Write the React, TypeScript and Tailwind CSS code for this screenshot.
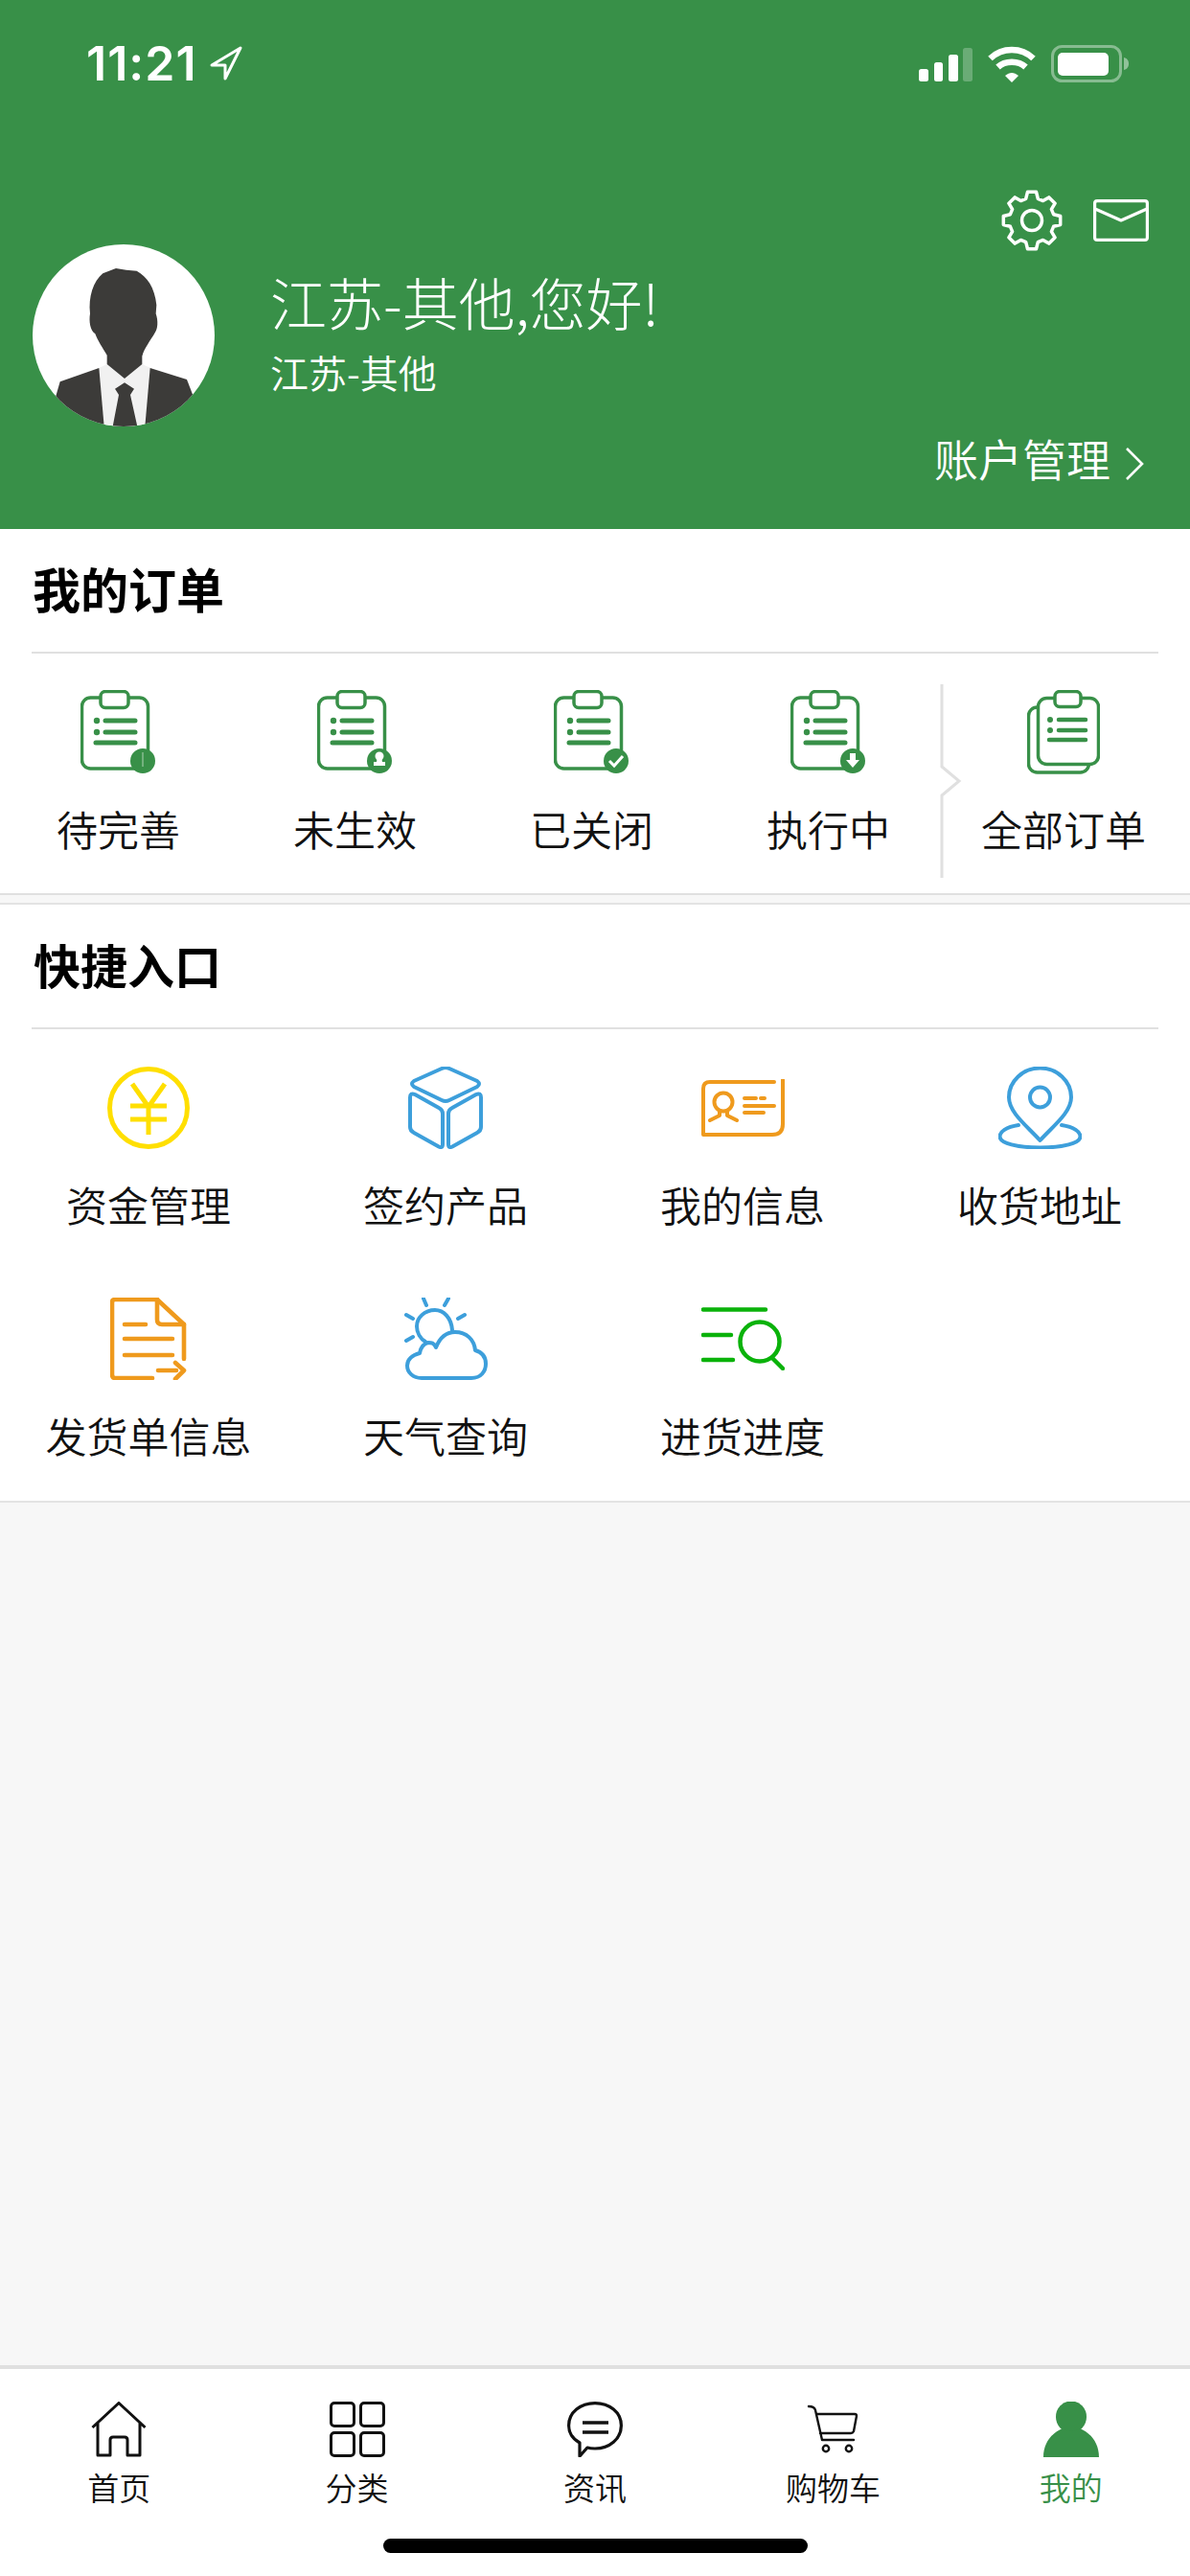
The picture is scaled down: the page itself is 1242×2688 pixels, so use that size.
import type { ReactNode } from 'react';

const GREEN = '#389048';

function gearPath() {
  const points: string[] = [];
  for (let i = 0; i < 8; i++) {
    const a = (i * Math.PI) / 4 - Math.PI / 2;
    const offsets: [number, number][] = [
      [-0.27, 23.5],
      [-0.15, 30],
      [0.15, 30],
      [0.27, 23.5],
    ];
    offsets.forEach(([da, r]) => {
      const x = 32 + r * Math.cos(a + da);
      const y = 32 + r * Math.sin(a + da);
      points.push(`${x.toFixed(1)} ${y.toFixed(1)}`);
    });
  }
  return 'M' + points.join(' L') + ' Z';
}

function StatusBar() {
  return (
    <div className="flex h-[132px] items-start justify-between pl-[90px] pr-[63px] pt-[47px]">
      <div className="flex items-center gap-[12px]">
        <span className="font-['Inter',sans-serif] text-[50px] leading-[38px] font-semibold tracking-[1px] text-white">
          11:21
        </span>
        <svg width="36" height="38" viewBox="0 0 36 38" fill="none" stroke="#fff" strokeWidth="3" strokeLinejoin="round">
          <path d="M33 3 L3 21 H17 V35 Z" />
        </svg>
      </div>
      <div className="flex items-center">
        <svg width="58" height="38" viewBox="0 0 58 38" fill="#fff">
          <rect x="2" y="24" width="10" height="13" rx="2.5" />
          <rect x="18" y="17" width="9" height="20" rx="2.5" />
          <rect x="33" y="9" width="10" height="28" rx="2.5" />
          <rect x="48" y="2" width="10" height="35" rx="2.5" opacity="0.25" />
        </svg>
        <svg className="ml-[16px]" width="50" height="38" viewBox="0 0 50 38" fill="none" stroke="#fff" strokeWidth="6.5">
          <path d="M2.5 13 C15 1, 35 1, 47.5 13" />
          <path d="M10.5 22 C18 15, 32 15, 39.5 22" />
          <path d="M18 31 L25 38 L32 31 C27 27, 23 27, 18 31 Z" fill="#fff" stroke="none" />
        </svg>
        <svg className="ml-[16px]" width="82" height="40" viewBox="0 0 82 40" fill="none">
          <rect x="1.5" y="1.5" width="71" height="36" rx="10" stroke="#fff" strokeOpacity="0.4" strokeWidth="3" />
          <rect x="7" y="8" width="53" height="24" rx="5" fill="#fff" />
          <path d="M76 13 C80 14, 81 17, 81 19.5 C81 22, 80 25, 76 26 Z" fill="#fff" fillOpacity="0.45" />
        </svg>
      </div>
    </div>
  );
}

function Avatar() {
  return (
    <div className="h-[190px] w-[190px] shrink-0 overflow-hidden rounded-full bg-white">
      <svg width="190" height="190" viewBox="42 45 570 570">
        <path d="M250 432 L275 420 H385 L412 432 L395 615 H265 Z" fill="#f1f1f1" />
        <path
          d="M262 136 L303 120 L335 125 L368 128 C400 145, 425 180, 430 235 L428 262 C436 285, 434 310, 425 322 C412 345, 392 370, 385 395 L385 420 L330 465 L275 420 L275 392 C262 370, 245 345, 238 325 C222 315, 218 285, 222 262 C216 210, 232 160, 262 136 Z"
          fill="#3c3b39"
        />
        <path d="M330 478 L360 497 L348 516 L370 615 H293 L312 516 L300 497 Z" fill="#3c3b39" />
        <path d="M115 520 L128 475 L250 432 L266 615 H100 Z" fill="#3c3b39" />
        <path d="M545 520 L525 468 L410 432 L394 615 H560 Z" fill="#3c3b39" />
      </svg>
    </div>
  );
}

function Header() {
  return (
    <header className="h-[552px] shrink-0 bg-[#389048] text-white">
      <StatusBar />
      <div className="flex h-[123px] items-start justify-end gap-[32px] pr-[43px] pt-[66px]">
        <svg width="64" height="64" viewBox="0 0 64 64" fill="none" stroke="#fff" strokeWidth="3.5" strokeLinejoin="round">
          <path d={gearPath()} />
          <circle cx="32" cy="32" r="10.5" />
        </svg>
        <svg className="mt-[10px]" width="58" height="44" viewBox="0 0 58 44" fill="none" stroke="#fff" strokeWidth="3.2" strokeLinejoin="round">
          <rect x="1.6" y="1.6" width="54.8" height="40.8" rx="2.5" />
          <path d="M2 10 L29 22 L56 10" />
        </svg>
      </div>
      <div className="flex items-start pl-[34px]">
        <Avatar />
        <div className="ml-[58px] pt-[24px]">
          <p className="text-[59px] leading-[72px] font-light">江苏-其他,您好!</p>
          <p className="mt-[12px] text-[40px] leading-[50px] font-[350]">江苏-其他</p>
        </div>
      </div>
      <div className="mt-[3px] flex items-center justify-end pr-[48px]">
        <span className="text-[46px] leading-[58px] font-[350]">账户管理</span>
        <svg className="ml-[15px] mt-[14px]" width="20" height="34" viewBox="0 0 20 34" fill="none" stroke="#fff" strokeWidth="2.6">
          <path d="M2 1 L18 17 L2 33" />
        </svg>
      </div>
    </header>
  );
}

function Clipboard({ badge }: { badge: ReactNode }) {
  return (
    <svg width="80" height="88" viewBox="0 0 80 88" fill="none">
      <rect x="1.5" y="8" width="69" height="74" rx="9" stroke={GREEN} strokeWidth="3.5" fill="#fff" />
      <rect x="21" y="1.5" width="29" height="17" rx="5" stroke={GREEN} strokeWidth="3.5" fill="#fff" />
      <circle cx="17" cy="32" r="3.2" fill={GREEN} />
      <circle cx="17" cy="44" r="3.2" fill={GREEN} />
      <path d="M26 32 H57 M26 44 H57 M16 55 H57" stroke={GREEN} strokeWidth="5" strokeLinecap="round" />
      <circle cx="65" cy="74" r="13" fill={GREEN} />
      {badge}
    </svg>
  );
}

function AllOrdersIcon() {
  return (
    <svg width="76" height="88" viewBox="0 0 76 88" fill="none">
      <rect x="1.5" y="18" width="63" height="68" rx="9" stroke={GREEN} strokeWidth="3.5" fill="#fff" />
      <rect x="11.5" y="8.5" width="63" height="69" rx="9" stroke={GREEN} strokeWidth="3.5" fill="#fff" />
      <rect x="29" y="1.5" width="27" height="16" rx="5" stroke={GREEN} strokeWidth="3.5" fill="#fff" />
      <circle cx="24" cy="31" r="3" fill={GREEN} />
      <circle cx="24" cy="42" r="3" fill={GREEN} />
      <path d="M33 31 H61 M33 42 H61 M23 52 H61" stroke={GREEN} strokeWidth="4.5" strokeLinecap="round" />
    </svg>
  );
}

const orders: { label: string; badge: ReactNode }[] = [
  { label: '待完善', badge: <path d="M65 65 V80" stroke="#fff" strokeOpacity="0.6" strokeWidth="1" /> },
  {
    label: '未生效',
    badge: (
      <g fill="#fff">
        <circle cx="65" cy="69" r="4.5" />
        <path d="M62.5 72 H67.5 L68 75 H71 V79 H59 V75 H62 Z" />
      </g>
    ),
  },
  {
    label: '已关闭',
    badge: <path d="M58 74 L63 79 L72 69" stroke="#fff" strokeWidth="3" />,
  },
  {
    label: '执行中',
    badge: <path d="M62 66 H68 V73 H72 L65 81 L58 73 H62 Z" fill="#fff" />,
  },
];

function OrderItem({ icon, label }: { icon: ReactNode; label: string }) {
  return (
    <div className="flex flex-col items-center">
      {icon}
      <span className="mt-[35px] text-[43px] leading-[42px] font-[350] whitespace-nowrap text-[#111]">{label}</span>
    </div>
  );
}

function OrdersSection() {
  return (
    <section className="h-[380px] shrink-0 bg-white">
      <h2 className="flex h-[128px] items-center pb-[6px] pl-[34px] text-[50px] font-semibold text-black">我的订单</h2>
      <div className="mx-[33px] h-[2px] bg-[#e0e0e0]" />
      <div className="flex pt-[32px]">
        <div className="flex pt-[6px]">
          {orders.map((o) => (
            <div key={o.label} className="w-[247px]">
              <OrderItem label={o.label} icon={<Clipboard badge={o.badge} />} />
            </div>
          ))}
        </div>
        <svg className="-ml-[7px] shrink-0" width="24" height="202" viewBox="0 0 24 202" fill="none" stroke="#e0e0e0" strokeWidth="3">
          <path d="M2 0 V86 L20 101 L2 116 V202" />
        </svg>
        <div className="w-[210px] pt-[6px]">
          <OrderItem label="全部订单" icon={<AllOrdersIcon />} />
        </div>
      </div>
    </section>
  );
}

const BLUE = '#3d9fdb';
const ORANGE = '#ef9a1d';

const quickLinks: { label: string; icon: ReactNode }[] = [
  {
    label: '资金管理',
    icon: (
      <svg width="86" height="86" viewBox="0 0 86 86" fill="none" stroke="#ffdf00" strokeWidth="5">
        <circle cx="43" cy="43" r="40.5" />
        <path d="M26 18 L43 42 L60 18 M24 41 H62 M24 55 H62 M43 42 V71" />
      </svg>
    ),
  },
  {
    label: '签约产品',
    icon: (
      <svg width="78" height="86" viewBox="0 0 78 86" fill="none" stroke={BLUE} strokeWidth="4" strokeLinejoin="round">
        <path d="M35 2 Q39 0 43 2 L72 15 Q76 18 72 21 L43 35 Q39 37 35 35 L6 21 Q2 18 6 15 Z" />
        <path d="M2 32 Q2 27 7 29 L32 43 Q36 45 36 49 V81 Q36 86 31 83 L6 69 Q2 67 2 63 Z" />
        <path d="M76 32 Q76 27 71 29 L46 43 Q42 45 42 49 V81 Q42 86 47 83 L72 69 Q76 67 76 63 Z" />
      </svg>
    ),
  },
  {
    label: '我的信息',
    icon: (
      <svg width="87" height="60" viewBox="0 0 87 60" fill="none" stroke={ORANGE} strokeWidth="4" strokeLinecap="round" strokeLinejoin="round">
        <path d="M76 3 H9 Q2 3 2 10 V58 H74 Q85 58 85 47 V1" />
        <circle cx="23" cy="24" r="9.5" />
        <path d="M19 33 V38 L9 43 M27 33 V38 L37 43" />
        <path d="M45 20 H57 M62 20 H66 M45 28 H76 M45 35 H65" />
      </svg>
    ),
  },
  {
    label: '收货地址',
    icon: (
      <svg width="87" height="86" viewBox="0 0 87 86" fill="none" stroke={BLUE} strokeWidth="4" strokeLinejoin="round" strokeLinecap="round">
        <path d="M43.5 77 C30 62, 11 48, 11 32 A32.5 30.5 0 1 1 76 32 C76 48, 57 62, 43.5 77 Z" />
        <circle cx="43.5" cy="32" r="10.5" />
        <path d="M21 61 C8 63, 1.5 68, 1.5 73 C1.5 80, 20 84.5, 43.5 84.5 C67 84.5, 85.5 80, 85.5 73 C85.5 68, 79 63, 66 61" />
      </svg>
    ),
  },
  {
    label: '发货单信息',
    icon: (
      <svg width="80" height="86" viewBox="0 0 80 86" fill="none" stroke={ORANGE} strokeWidth="4.6" strokeLinecap="round" strokeLinejoin="round">
        <path d="M44 84 H5 Q2 84 2 80 V5 Q2 2 5 2 H49 L77 28 V64" />
        <path d="M49 2 V23 Q49 28 54 28 H77" />
        <path d="M15 28 H37 M15 43 H65 M15 60 H65 M50 76 H69 M68 68 L77 76 L68 85" />
      </svg>
    ),
  },
  {
    label: '天气查询',
    icon: (
      <svg width="87" height="86" viewBox="0 0 87 86" fill="none" stroke={BLUE} strokeWidth="4" strokeLinecap="round" strokeLinejoin="round">
        <path d="M20 1 L23 8 M46 1 L42 8 M2 18 L9 22 M63 18 L56 22 M2 45 L9 41" />
        <path d="M50 34 C49 21, 41 13, 32 13 C21 13, 13 21, 13 30 C13 37, 17 43, 22 46" />
        <path d="M18 84 H70 C80 84 85 77 85 69 C85 62 81 57 74 55 C73 44 65 36 53 36 C44 36 37 42 33 52 C31 47 28 47 25 47 C20 48 17 53 16 58 C8 60 3 65 3 71 C3 78 9 84 18 84 Z" />
      </svg>
    ),
  },
  {
    label: '进货进度',
    icon: (
      <svg width="87" height="66" viewBox="0 0 87 66" fill="none" stroke="#0ab20a" strokeWidth="4.5" strokeLinecap="round">
        <path d="M2 2.5 H67 M2 29 H31 M2 55 H33" />
        <circle cx="61" cy="36" r="20.5" />
        <path d="M74 53 L85 64" />
      </svg>
    ),
  },
];

function QuickSection() {
  return (
    <section className="h-[626px] shrink-0 border-y-2 border-[#e3e3e3] bg-white">
      <h2 className="flex h-[128px] items-center pb-[5px] pl-[35px] text-[49px] font-semibold text-black">快捷入口</h2>
      <div className="mx-[33px] h-[2px] bg-[#e0e0e0]" />
      <div className="grid grid-cols-[repeat(4,310px)] gap-y-[77px] pt-[39px]">
        {quickLinks.map((q) => (
          <div key={q.label} className="flex flex-col items-center">
            <div className="flex h-[86px] items-center">{q.icon}</div>
            <span className="mt-[36px] text-[43px] leading-[42px] font-[350] whitespace-nowrap text-[#111]">{q.label}</span>
          </div>
        ))}
      </div>
    </section>
  );
}

const tabs: { label: string; active?: boolean; icon: ReactNode }[] = [
  {
    label: '首页',
    icon: (
      <svg width="58" height="58" viewBox="0 0 58 58" fill="none" stroke="#111" strokeWidth="3" strokeLinejoin="round">
        <path d="M1.5 27 L29 1.5 L56.5 27 M7 22 V56 H20 V40 Q20 37 23 37 H35 Q38 37 38 40 V56 H51 V22" />
      </svg>
    ),
  },
  {
    label: '分类',
    icon: (
      <svg width="58" height="58" viewBox="0 0 58 58" fill="none" stroke="#111" strokeWidth="3">
        <rect x="1.5" y="1.5" width="24" height="24" rx="3.5" />
        <rect x="32.5" y="1.5" width="24" height="24" rx="3.5" />
        <rect x="1.5" y="32.5" width="24" height="24" rx="3.5" />
        <rect x="32.5" y="32.5" width="24" height="24" rx="3.5" />
      </svg>
    ),
  },
  {
    label: '资讯',
    icon: (
      <svg width="58" height="58" viewBox="0 0 58 58" fill="none" stroke="#111" strokeWidth="3.2" strokeLinejoin="round">
        <path d="M29 1.6 C44 1.6, 56.4 11, 56.4 25 C56.4 39, 44 49, 29 49 C26 49, 24 49, 21 48 L13 57 L13 43 C6 39, 1.6 33, 1.6 25 C1.6 11, 14 1.6, 29 1.6 Z" />
        <path d="M16 22 H43 M16 32 H43" strokeWidth="3.6" />
      </svg>
    ),
  },
  {
    label: '购物车',
    icon: (
      <svg width="58" height="58" viewBox="0 0 58 58" fill="none" stroke="#111" strokeWidth="2.4" strokeLinecap="round" strokeLinejoin="round">
        <path d="M4 5 Q10 5 11 9 L18 40 H51 M12 13 H52 Q54 13 54 15 L51 31 Q50 33 48 33 H16" />
        <circle cx="22" cy="49" r="3.2" />
        <circle cx="46" cy="49" r="3.2" />
      </svg>
    ),
  },
  {
    label: '我的',
    active: true,
    icon: (
      <svg width="58" height="58" viewBox="0 0 58 58" fill={GREEN}>
        <ellipse cx="29" cy="16" rx="16" ry="16.5" />
        <path d="M0 58 C0 42, 10 32, 20 28 C26 32, 32 32, 38 28 C48 32, 58 42, 58 58 Z" />
      </svg>
    ),
  },
];

function TabBar() {
  return (
    <nav className="h-[220px] shrink-0 border-t-4 border-[#e0e0e0] bg-white">
      <div className="grid grid-cols-5 pt-[34px]">
        {tabs.map((t) => (
          <div key={t.label} className="flex flex-col items-center">
            {t.icon}
            <span className={`mt-[15px] text-[33px] leading-[32px] font-[350] ${t.active ? 'text-[#389048]' : 'text-[#111]'}`}>
              {t.label}
            </span>
          </div>
        ))}
      </div>
      <div className="mx-auto mt-[38px] h-[15px] w-[443px] rounded-full bg-black" />
    </nav>
  );
}

export default function App() {
  return (
    <div className="flex h-[2688px] w-[1242px] flex-col overflow-hidden bg-[#f7f7f7] font-['Noto_Sans_CJK_SC',sans-serif]">
      <Header />
      <OrdersSection />
      <div className="h-[10px] shrink-0 border-t-2 border-[#e0e0e0] bg-[#f7f7f7]" />
      <QuickSection />
      <main className="flex-1" />
      <TabBar />
    </div>
  );
}
